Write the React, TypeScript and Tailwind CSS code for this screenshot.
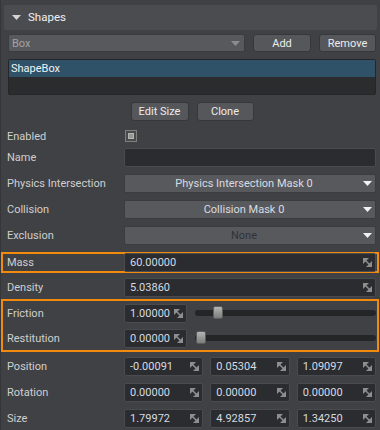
import React from 'react';

const font = { fontFamily: 'Roboto, "Liberation Sans", sans-serif' };

function SpinIcon() {
  return (
    <svg width="9" height="9" viewBox="0 0 9 9" className="shrink-0">
      <path d="M0 0H6L0 6Z" fill="#8e8e8e" />
      <path d="M9 3V9H3Z" fill="#8e8e8e" />
      <path d="M1 1L8 8" stroke="#8e8e8e" strokeWidth="1.5" />
    </svg>
  );
}

function DownArrow({ color = '#f2f2f2' }: { color?: string }) {
  return (
    <svg width="9" height="5" viewBox="0 0 9 5" className="shrink-0">
      <path d="M0 0H9L4.5 5Z" fill={color} />
    </svg>
  );
}

function NumField({ value, className = '', gap = 'mr-[2px]' }: { value: string; className?: string; gap?: string }) {
  return (
    <div
      className={`flex items-center h-[19px] bg-[#2b2c2f] border border-[#4a4b4f] rounded-[2px] pl-[5px] pr-[3px] ${className}`}
    >
      <span className={`flex-1 min-w-0 ${gap} overflow-hidden whitespace-nowrap text-[#d4dbe2]`}>{value}</span>
      <SpinIcon />
    </div>
  );
}

function Dropdown({ value, disabled }: { value: string; disabled?: boolean }) {
  return (
    <div className="flex-1 flex items-center h-[19px] bg-[#58595d] border border-[#3b3c3f] rounded-[2px]">
      <span className={`flex-1 text-center ${disabled ? 'text-[#313235]' : 'text-[#d8dce0]'}`}>{value}</span>
      <span className="mr-[3px]">
        <DownArrow />
      </span>
    </div>
  );
}

function Label({ children }: { children: React.ReactNode }) {
  return <div className="w-[117px] shrink-0 text-[#cfcfcf] whitespace-nowrap">{children}</div>;
}

function Row({ label, children, className = '' }: { label: string; children: React.ReactNode; className?: string }) {
  return (
    <div className={`flex items-center h-[19px] pl-[6px] pr-[3px] ${className}`}>
      <Label>{label}</Label>
      <div className="flex-1 flex items-center min-w-0">{children}</div>
    </div>
  );
}

function Slider({ pos }: { pos: number }) {
  return (
    <div className="flex-1 relative h-[14px] flex items-center">
      <div className="w-full h-[6px] rounded-[3px] bg-[#242527]" />
      <div
        className="absolute top-0 w-[10px] h-[13px] rounded-[2px] border border-[#5c5c5c] bg-gradient-to-b from-[#b4b4b4] to-[#7c7c7c]"
        style={{ left: pos }}
      />
    </div>
  );
}

function Button({ children, className = '' }: { children: React.ReactNode; className?: string }) {
  return (
    <div
      className={`h-full flex items-center justify-center bg-[#56575b] border border-[#36373a] rounded-[3px] text-[#ececec] ${className}`}
    >
      {children}
    </div>
  );
}

export default function App() {
  return (
    <div
      className="w-[380px] h-[430px] overflow-hidden bg-[#404144] border-l border-[#353639] text-[11px] leading-none"
      style={font}
    >
      {/* header */}
      <div className="mt-[5px] ml-[3px] w-[373px] h-[25px] flex items-center bg-[#4b4c50] rounded-[2px]">
        <span className="ml-[8px] mr-[7px]">
          <DownArrow color="#d4d4d4" />
        </span>
        <span className="text-[#f0f0f0] text-[11.5px]">Shapes</span>
      </div>

      <div className="pl-[7px] pr-[4px]">
        {/* combo + add/remove */}
        <div className="mt-[4px] h-[18px] flex gap-[8px]">
          <div className="w-[237px] h-full flex items-center bg-[#58595d] border border-[#3b3c3f] rounded-[2px] pl-[3px] pr-[4px]">
            <span className="flex-1 text-[#a3a3a3]">Box</span>
            <DownArrow color="#8c8c8c" />
          </div>
          <Button className="w-[58px]">Add</Button>
          <Button className="w-[57px]">Remove</Button>
        </div>

        {/* list */}
        <div className="mt-[7px] h-[36px] bg-[#2b2c2e] border border-[#252628] rounded-[2px]">
          <div className="h-[17px] flex items-center bg-[#2f5269] pl-[2px] text-[#eef2f5]">ShapeBox</div>
        </div>

        {/* edit/clone */}
        <div className="mt-[7px] h-[19px] flex justify-center gap-[8px]">
          <Button className="w-[58px]">Edit Size</Button>
          <Button className="w-[57px]">Clone</Button>
        </div>
      </div>

      {/* properties */}
      <div className="pr-[1px]">
        <div className="mt-[5px] h-[20px] flex items-center pl-[6px] pr-[3px]">
          <Label>Enabled</Label>
          <div className="ml-[1px] w-[12px] h-[12px] border border-[#7e7e7e] bg-[#4a4a4a] p-[2px]">
            <div className="w-full h-full bg-[#979797] border border-[#b4b4b4]" />
          </div>
        </div>

        <Row label="Name" className="mt-[2px]">
          <div className="flex-1 h-[19px] bg-[#2b2c2f] border border-[#4a4b4f] rounded-[2px]" />
        </Row>
        <Row label="Physics Intersection" className="mt-[7px]">
          <Dropdown value="Physics Intersection Mask 0" />
        </Row>
        <Row label="Collision" className="mt-[7px]">
          <Dropdown value="Collision Mask 0" />
        </Row>
        <Row label="Exclusion" className="mt-[7px]">
          <Dropdown value="None" disabled />
        </Row>

        {/* mass highlighted */}
        <div className="mt-[7px] h-[21px] flex items-center border-2 border-[#f28a0e] pl-[4px] pr-[1px]">
          <Label>Mass</Label>
          <NumField value="60.00000" className="flex-1 h-[17px]" />
        </div>

        <Row label="Density" className="mt-[5px]">
          <NumField value="5.03860" className="flex-1" />
        </Row>

        {/* friction / restitution highlighted */}
        <div className="mt-[2px] h-[53px] border-2 border-[#f28a0e] pl-[4px] pr-[1px] flex flex-col gap-[1px]">
          <div className="h-[24px] flex items-center">
            <Label>Friction</Label>
            <NumField value="1.00000" gap="mr-[4px]" className="w-[63px]" />
            <div className="flex-1 ml-[8px]">
              <Slider pos={18} />
            </div>
          </div>
          <div className="h-[24px] flex items-center">
            <Label>Restitution</Label>
            <NumField value="0.00000" gap="mr-[4px]" className="w-[63px]" />
            <div className="flex-1 ml-[8px]">
              <Slider pos={1} />
            </div>
          </div>
        </div>

        <Row label="Position" className="mt-[5px]">
          <div className="flex-1 grid grid-cols-3 gap-[7px]">
            <NumField value="-0.00091" />
            <NumField value="0.05304" />
            <NumField value="1.09097" />
          </div>
        </Row>
        <Row label="Rotation" className="mt-[7px]">
          <div className="flex-1 grid grid-cols-3 gap-[7px]">
            <NumField value="0.00000" />
            <NumField value="0.00000" />
            <NumField value="0.00000" />
          </div>
        </Row>
        <Row label="Size" className="mt-[7px]">
          <div className="flex-1 grid grid-cols-3 gap-[7px]">
            <NumField value="1.79972" />
            <NumField value="4.92857" />
            <NumField value="1.34250" />
          </div>
        </Row>
      </div>
    </div>
  );
}
